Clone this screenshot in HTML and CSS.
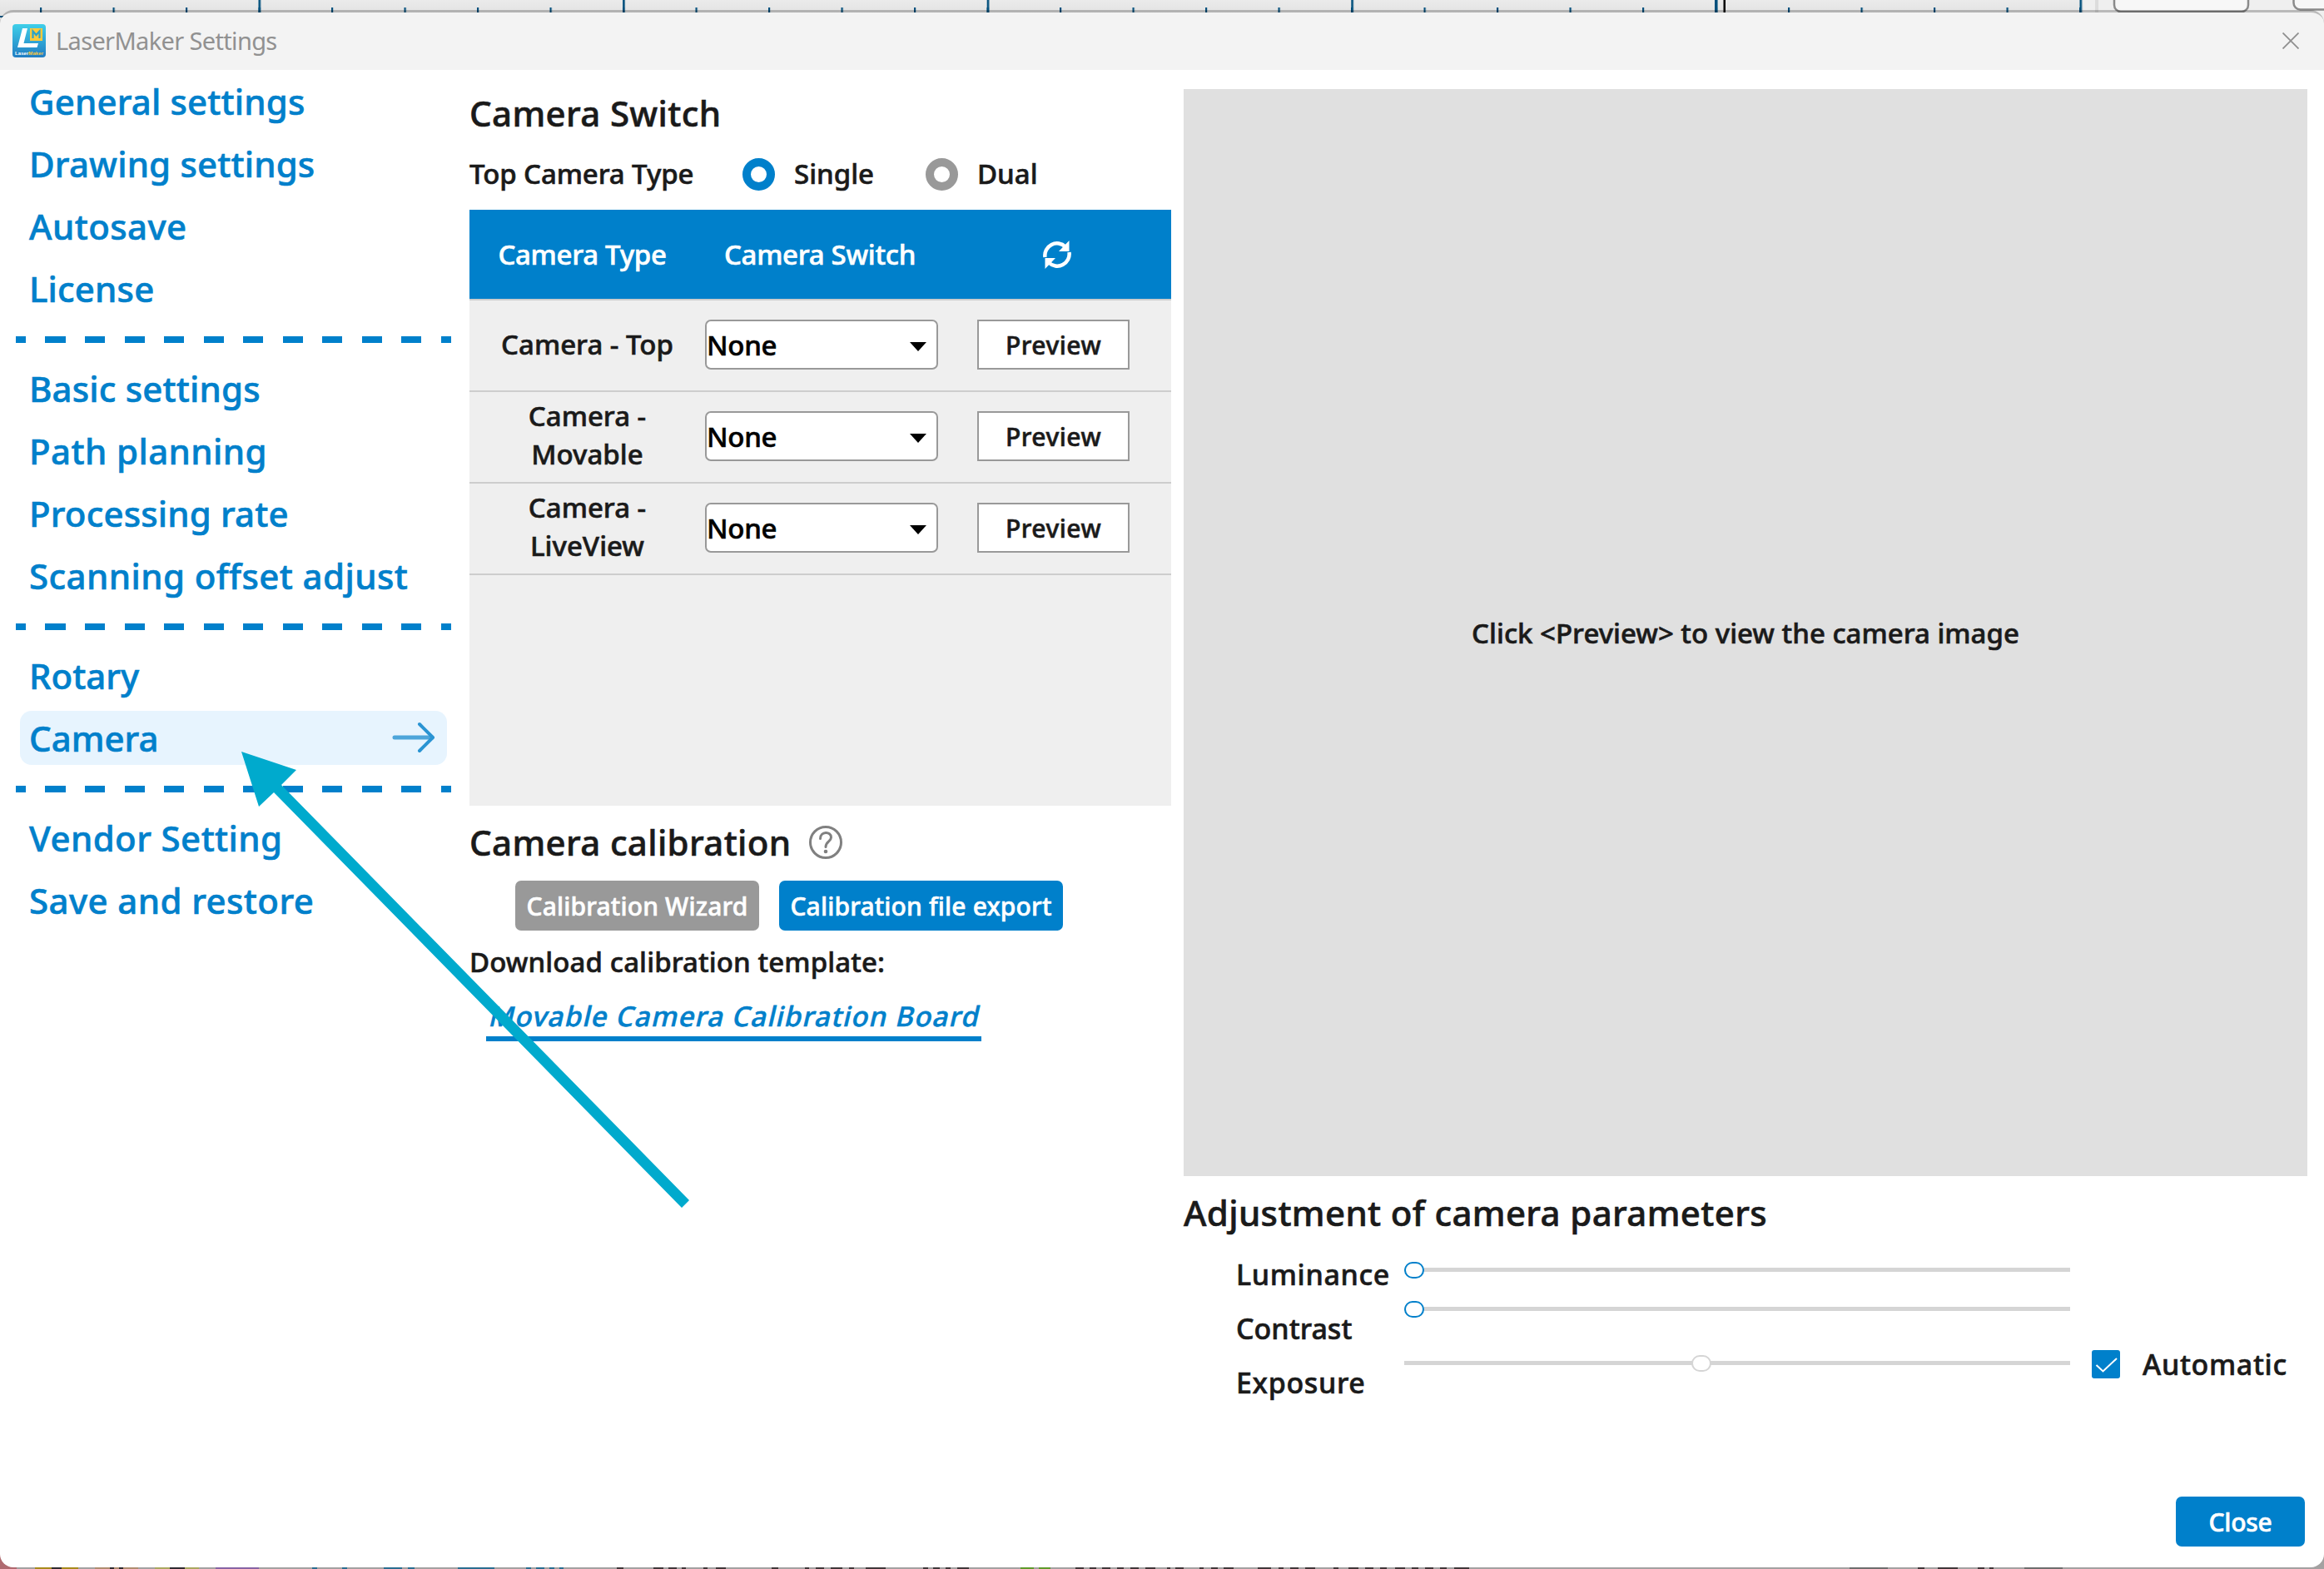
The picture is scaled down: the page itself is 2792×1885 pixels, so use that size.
FILE: index.html
```html
<!DOCTYPE html>
<html lang="en">
<head>
<meta charset="utf-8">
<title>LaserMaker Settings</title>
<link rel="stylesheet" href="styles.css">
</head>
<body>
<div class="ruler" aria-hidden="true">
  <svg width="2792" height="30" viewBox="0 0 2792 30">
    <defs>
      <linearGradient id="strip" x1="0" y1="0" x2="0" y2="1"><stop offset="0" stop-color="#ebebeb"/><stop offset="1" stop-color="#dcdcdc"/></linearGradient>
      <pattern id="minor" x="48" y="0" width="87.5" height="16" patternUnits="userSpaceOnUse"><rect x="0" y="9" width="2.2" height="7" fill="#004f7c"/></pattern>
      <pattern id="major" x="310.5" y="0" width="437.6" height="16" patternUnits="userSpaceOnUse"><rect x="0" width="2.6" height="16" fill="#004f7c"/></pattern>
    </defs>
    <rect width="2792" height="30" fill="url(#strip)"/>
    <rect width="2500" height="16" fill="url(#minor)"/>
    <rect width="2502" height="16" fill="url(#major)"/>
    <rect x="2060" width="3" height="16" fill="#004f7c"/>
    <rect x="2070.500" width="2.500" height="15" fill="#000"/>
    <rect x="0" y="19" width="4" height="2" fill="#004f7c"/>
    <rect x="2503" width="289" height="30" fill="#efefef"/>
    <rect x="2517" width="4" height="15" fill="#dcdcdc"/>
    <rect x="2540" y="-20" width="161" height="34" rx="8" fill="#f7f7f7" stroke="#8a8a8a" stroke-width="2.500"/>
    <rect x="2755.500" y="-20" width="80" height="31.500" rx="8" fill="#f7f7f7" stroke="#8a8a8a" stroke-width="2.500"/>
  </svg>
</div>
<div class="statusbar" aria-hidden="true">
  <svg width="2792" height="22" viewBox="0 0 2792 22">
    <rect width="2792" height="22" fill="#a3a1a1"/>
    <rect width="20" height="22" fill="#b06a70"/>
    <g transform="translate(0 20)">
      <path d="M42 1h52" stroke="#a88a1c" stroke-width="2"/>
      <path d="M114 1h52" stroke="#b08d70" stroke-width="2"/>
      <path d="M186 1h53" stroke="#aaa860" stroke-width="2"/>
      <path d="M62 1h12M132 1h5M143 1h5M204 1h18" stroke="#2f2a30" stroke-width="2"/>
      <path d="M259 1h52" stroke="#8764a4" stroke-width="2"/>
      <path d="M375 1h6M411 1h6M461 1h22M490 1h8M550 1h44M632 1h6M644 1h10M660 1h6M672 1h5" stroke="#2b6d90" stroke-width="2"/>
      <path d="M741 1h8M785 1h12M803 1h10M819 1h5M845 1h5M860 1h12M927 1h8M967 1h5M980 1h10M998 1h14M1020 1h6M1040 1h24M1109 1h6M1121 1h8M1136 1h6M1150 1h14M1292 1h10M1309 1h8M1324 1h10M1342 1h8M1358 1h10M1376 1h12M1402 1h4M1412 1h10M1441 1h5M1455 1h8M1470 1h12M1511 1h16M1536 1h6M1550 1h10M1568 1h12M1602 1h6M1620 1h12M1640 1h10M1658 1h8M1676 1h12M1696 1h8M1712 1h10M1730 1h8M1747 1h18" stroke="#40383a" stroke-width="2"/>
      <path d="M1226 1h16M1248 1h14" stroke="#5f9a2c" stroke-width="2"/>
      <path d="M2222 1h46M2432 1h46" stroke="#6e6e6e" stroke-width="2"/>
      <path d="M2304 1h8M2328 1h24M2376 1h8M2390 1h5" stroke="#40383a" stroke-width="2"/>
    </g>
  </svg>
</div>
<div class="window">
  <header class="titlebar">
    <svg class="app-icon" width="40" height="40" viewBox="0 0 40 40">
      <defs><linearGradient id="app" x1="0" y1="0" x2="0" y2="1"><stop offset="0" stop-color="#3fcfe9"/><stop offset="1" stop-color="#217dc2"/></linearGradient></defs>
      <rect width="40" height="40" rx="4" fill="url(#app)"/>
      <path d="M12 5h6l-4.500 18H31l-1.500 5H6z" fill="#fff"/>
      <rect x="21" y="5" width="15" height="15" fill="#ffca3a"/>
      <path d="M24.500 17V8.500l4 4.500 4-4.500V17" fill="none" stroke="#2ba3c9" stroke-width="2.200"/>
      <text x="3" y="36.500" class="app-word" textLength="34"><tspan fill="#fff">Laser</tspan><tspan fill="#ffca3a">Maker</tspan></text>
    </svg>
    <span class="title">LaserMaker Settings</span>
    <svg class="win-close" width="20" height="20" viewBox="0 0 20 20"><path d="M.5.5l19 19M19.500.5l-19 19" stroke="#8f8f8f" stroke-width="1.800"/></svg>
  </header>
  <div class="body">
    <nav class="nav">
      <a class="item">General settings</a>
      <a class="item">Drawing settings</a>
      <a class="item loose">Autosave</a>
      <a class="item">License</a>
      <div class="dash"></div>
      <a class="item">Basic settings</a>
      <a class="item loose">Path planning</a>
      <a class="item">Processing rate</a>
      <a class="item loose">Scanning offset adjust</a>
      <div class="dash"></div>
      <a class="item tight">Rotary</a>
      <a class="item tight active">Camera
        <svg width="52" height="40" viewBox="0 0 52 40"><path d="M3 20h45" stroke="#4da5da" stroke-width="5" stroke-linecap="round"/><path d="M33 4l16 16-16 16" fill="none" stroke="#2a94d3" stroke-width="4" stroke-linecap="round" stroke-linejoin="round"/></svg>
      </a>
      <div class="dash"></div>
      <a class="item loose">Vendor Setting</a>
      <a class="item loose">Save and restore</a>
    </nav>
    <main class="cameras">
      <h2>Camera Switch</h2>
      <div class="radios">
        <span class="lead">Top Camera Type</span>
        <i class="radio on"></i><span class="single">Single</span>
        <i class="radio"></i><span>Dual</span>
      </div>
      <div class="table">
        <div class="row head">
          <span class="col-type">Camera Type</span><span class="col-switch">Camera Switch</span>
          <svg width="36" height="36" viewBox="0 0 36 36" fill="none" stroke="#fff" stroke-width="4.500"><path d="M3.500 21A14.500 14.500 0 0 1 28 8.500M32.500 15A14.500 14.500 0 0 1 8 27.500"/><path d="M32.500 1v13H20zM3.500 35V22H16z" fill="#fff" stroke="none"/></svg>
        </div>
        <div class="row"><span class="name one">Camera - Top</span><div class="select"><span>None</span><i class="caret"></i></div><button class="preview">Preview</button></div>
        <div class="row"><span class="name">Camera -<br>Movable</span><div class="select"><span>None</span><i class="caret"></i></div><button class="preview">Preview</button></div>
        <div class="row"><span class="name">Camera -<br>LiveView</span><div class="select"><span>None</span><i class="caret"></i></div><button class="preview">Preview</button></div>
        <div class="rest"></div>
      </div>
      <h2 class="calib"><span>Camera calibration</span>
        <svg width="42" height="42" viewBox="0 0 42 42" fill="none" stroke="#808080" stroke-width="3"><circle cx="21" cy="21" r="18.500"/><path d="M14.500 16.500c0-9 13-9 13-1.500 0 5-6.500 5-6.500 11.500" stroke-linecap="round"/><circle cx="21" cy="32" r="2.300" fill="#808080" stroke="none"/></svg>
      </h2>
      <div class="actions"><button class="btn muted">Calibration Wizard</button><button class="btn">Calibration file export</button></div>
      <p class="download">Download calibration template:</p>
      <a class="template"><span>Movable Camera Calibration Board</span></a>
    </main>
    <section class="view">
      <div class="screen">Click &lt;Preview&gt; to view the camera image</div>
      <h2>Adjustment of camera parameters</h2>
      <div class="params">
        <div class="labels"><span class="wide">Luminance</span><span>Contrast</span><span class="wide">Exposure</span></div>
        <div class="sliders">
          <div class="slider"><i class="thumb"></i></div>
          <div class="slider"><i class="thumb"></i></div>
          <div class="slider off"><i class="thumb" style="margin-left:345px"></i></div>
        </div>
        <div class="auto"><svg width="34" height="34" viewBox="0 0 34 34"><rect width="34" height="34" rx="3" fill="#0080cb"/><path d="M5.500 18l8 7.500L30 10" fill="none" stroke="#fff" stroke-width="2"/></svg><span class="wide">Automatic</span></div>
      </div>
      <button class="btn close">Close</button>
    </section>
  </div>
</div>
<svg class="pointer" width="540" height="550" viewBox="0 0 540 550"><path d="M0 0l66 22-18 18L538 539l-9 9L39 49 21 66z" fill="#00aacd"/></svg>
</body>
</html>
```

FILE: styles.css
```css
* { box-sizing: border-box; }
body {
  margin: 0;
  width: 2792px;
  height: 1885px;
  overflow: hidden;
  position: relative;
  background: #a3a1a1;
  font-family: "Noto Sans", "Open Sans", sans-serif;
  font-weight: 500;
  font-size: 33px;
  color: #1a1a1a;
  -webkit-text-stroke: 0.6px;
}
h2, p { margin: 0; }
button { font: inherit; padding: 0; border: 0; letter-spacing: inherit; }
svg { display: block; flex: none; }

/* Slivers of the application behind the dialog */
.ruler { position: absolute; inset: 0 0 auto; }
.statusbar { position: absolute; inset: auto 0 0; height: 22px; }

.window {
  position: relative;
  height: 1883px;
  padding-top: 12px;
}
.titlebar {
  height: 72px;
  border-top: 3px solid rgba(0, 0, 0, 0.22);
  border-radius: 16px 16px 0 0;
  background: #f3f3f3 padding-box;
  display: flex;
  align-items: center;
  padding: 0 30px 0 15px;
}
.app-icon { margin-right: 12px; margin-top: -2px; }
.app-word { font: bold 6px "Liberation Sans", sans-serif; -webkit-text-stroke: 0; }
.title {
  flex: none;
  margin-bottom: 2px;
  font-size: 29px;
  font-weight: 400;
  line-height: 40px;
  letter-spacing: -0.65px;
  color: #919191;
  -webkit-text-stroke: 0;
}
.win-close { margin-left: auto; margin-bottom: 2px; }
.body {
  height: 1799px;
  background: #fff;
  border-radius: 0 0 16px 16px;
  display: grid;
  grid-template-columns: 564px 843px 1350px;
}

.nav { padding: 5px 0 0 24px; color: #0080cb; font-size: 42px; letter-spacing: 0.15px; }
.item {
  display: flex;
  align-items: center;
  justify-content: space-between;
  width: 513px;
  height: 65px;
  margin-bottom: 10px;
  padding: 0 14px 1px 11px;
  border-radius: 14px;
  white-space: nowrap;
}
.loose { letter-spacing: 0.4px; }
.tight { letter-spacing: 0; }
.active { background: #e7f4fe; }
.dash {
  width: 523px;
  height: 8px;
  margin: 25px 0 22px -5px;
  background: repeating-linear-gradient(90deg, #0080cb 0 12px, transparent 12px 35.5px, #0080cb 35.5px 47.55px);
}

h2 { height: 60px; line-height: 60px; font-size: 42px; font-weight: 500; letter-spacing: 0.35px; white-space: nowrap; }
.cameras { padding-top: 22px; }
.radios { display: flex; align-items: center; height: 39px; margin: 24px 0 23px; }
.radios span { margin-top: -2px; }
.radio { width: 39px; height: 39px; border: 10px solid #999; border-radius: 50%; margin-right: 23px; flex: none; }
.radio.on { border-color: #0080cb; }
.lead { width: 328px; letter-spacing: -0.1px; }
.single { width: 158px; }
.table { height: 716px; background: #efefef; }
.row {
  display: grid;
  grid-template-columns: 283px 280px 280px;
  align-items: center;
  justify-items: center;
  height: 110px;
  box-shadow: inset 0 2px #cdcdcd;
}
.head { height: 107px; background: #0080cb; color: #fff; box-shadow: none; letter-spacing: -0.3px; }
.head svg { margin-left: 6px; }
.head span { padding-bottom: 1px; }
.col-type { margin-right: 12px; }
.col-switch { margin-right: 4px; }
.rest { height: 2px; background: #cdcdcd; }
.name { text-align: center; line-height: 46px; padding-bottom: 3px; }
.name.one { padding-bottom: 0; }
.select {
  width: 280px;
  height: 60px;
  border: 2px solid #999;
  border-radius: 7px;
  background: #fff;
  color: #000;
  letter-spacing: -0.3px;
  display: flex;
  align-items: center;
  justify-content: space-between;
  padding: 0 12px 0 0;
}
.caret { border: 10px solid transparent; border-top: 11px solid #000; border-bottom: 0; margin-top: 5px; }
.preview { width: 183px; height: 60px; margin-right: 3px; border: 2px solid #999; background: #fff; color: #1a1a1a; font-size: 30px; letter-spacing: 0.5px; }
.calib { margin-top: 14px; display: flex; align-items: center; gap: 21px; }
.actions { display: flex; gap: 24px; margin: 16px 0 0 55px; }
.btn { width: 341px; height: 60px; border-radius: 7px; background: #0080cb; color: #fff; font-size: 30px; letter-spacing: 0.15px; white-space: nowrap; }
.muted { width: 293px; background: #999; }
.download { height: 50px; line-height: 52px; margin-top: 12px; letter-spacing: 0.1px; }
.template {
  display: block;
  width: 595px;
  height: 56px;
  margin: 15px 0 0 20px;
  padding-left: 5px;
  line-height: 51px;
  border-bottom: 6px solid #0080cb;
  color: #0080cb;
  white-space: nowrap;
}
.template span { display: inline-block; transform: skewX(-13deg); letter-spacing: 1.25px; }

.view { padding-top: 23px; display: flex; flex-direction: column; margin: 0 -15px 0 15px; }
.screen { height: 1306px; background: #e0e0e0; display: flex; align-items: center; justify-content: center; }
.view h2 { margin-top: 14px; }
.params { display: grid; grid-template-columns: 202px 800px 1fr; padding-left: 63px; margin-top: 10px; font-size: 34px; }
.labels { display: grid; grid-auto-rows: 65px; line-height: 68px; }
.labels span { justify-self: start; }
.wide { letter-spacing: 0.65px; }
.sliders { padding-top: 19px; }
.slider { height: 20px; margin-bottom: 27px; background: linear-gradient(#d5d5d5, #d5d5d5) 0 7px / 100% 5px no-repeat; }
.slider.off { margin-top: 45px; }
.thumb { display: block; width: 24px; height: 20px; border: 2.5px solid #0080cb; border-radius: 10px; background: #fff; }
.off .thumb { border-color: #d5d5d5; }
.auto { display: flex; align-items: center; gap: 27px; height: 40px; margin: 122px 0 0 26px; }
.close { width: 155px; margin: 106px 3px 0 auto; letter-spacing: -0.3px; }

/* Callout arrow lying over the dialog */
.pointer { position: absolute; left: 290px; top: 903px; }
```
